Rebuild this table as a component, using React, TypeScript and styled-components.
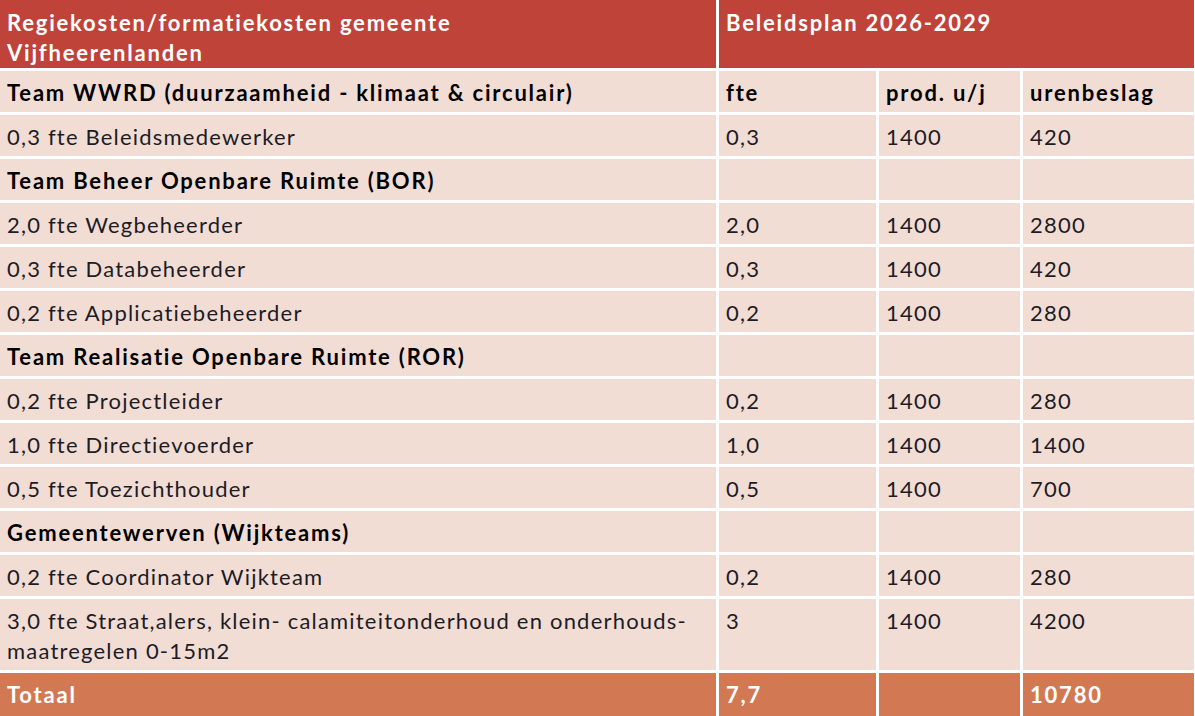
import styled, { createGlobalStyle } from "styled-components";

const GlobalStyle = createGlobalStyle`
	html, body {
		margin: 0;
		padding: 0;
		background: #ffffff;
	}
	body {
		width: 1195px;
		height: 716px;
		overflow: hidden;
		font-family: Lato, "Open Sans", sans-serif;
	}
`;

type Variant = "head" | "body" | "total";

const colors: Record<Variant, string> = {
	head: "#c0433a",
	body: "#f2ddd5",
	total: "#d27953",
};

const paddings: Record<Variant, string> = {
	head: "8px",
	body: "7px",
	total: "7px",
};

const Table = styled.div`
	display: grid;
	grid-template-columns: 716px 157px 141px 171px;
	grid-template-rows: 68px repeat(12, 41px) 71px 46px;
	gap: 3px;
	width: 1195px;
	padding-right: 1px;
	box-sizing: border-box;
	background: #ffffff;
`;

const Cell = styled.div<{ $variant: Variant; $bold?: boolean; $span?: number }>`
	grid-column: span ${(p) => p.$span ?? 1};
	background: ${(p) => colors[p.$variant]};
	color: ${(p) => (p.$variant === "body" ? (p.$bold ? "#000000" : "#1c1c26") : "#ffffff")};
	font-weight: ${(p) => (p.$bold || p.$variant !== "body" ? 700 : 400)};
	letter-spacing: ${(p) => (p.$bold || p.$variant !== "body" ? "1.8px" : "1.2px")};
	font-size: 22px;
	line-height: 30px;
	padding: ${(p) => paddings[p.$variant]} 7px 0 7px;
	box-sizing: border-box;
	white-space: pre-line;
	overflow: hidden;
`;

type Row = {
	label: string;
	fte?: string;
	prod?: string;
	uren?: string;
	group?: boolean;
};

const rows: Row[] = [
	{ label: "Team WWRD (duurzaamheid - klimaat & circulair)", fte: "fte", prod: "prod. u/j", uren: "urenbeslag", group: true },
	{ label: "0,3 fte Beleidsmedewerker", fte: "0,3", prod: "1400", uren: "420" },
	{ label: "Team Beheer Openbare Ruimte (BOR)", group: true },
	{ label: "2,0 fte Wegbeheerder", fte: "2,0", prod: "1400", uren: "2800" },
	{ label: "0,3 fte Databeheerder", fte: "0,3", prod: "1400", uren: "420" },
	{ label: "0,2 fte Applicatiebeheerder", fte: "0,2", prod: "1400", uren: "280" },
	{ label: "Team Realisatie Openbare Ruimte (ROR)", group: true },
	{ label: "0,2 fte Projectleider", fte: "0,2", prod: "1400", uren: "280" },
	{ label: "1,0 fte Directievoerder", fte: "1,0", prod: "1400", uren: "1400" },
	{ label: "0,5 fte Toezichthouder", fte: "0,5", prod: "1400", uren: "700" },
	{ label: "Gemeentewerven (Wijkteams)", group: true },
	{ label: "0,2 fte Coordinator Wijkteam", fte: "0,2", prod: "1400", uren: "280" },
	{
		label: "3,0 fte Straat,alers, klein- calamiteitonderhoud en onderhouds-\nmaatregelen 0-15m2",
		fte: "3",
		prod: "1400",
		uren: "4200",
	},
];

function App() {
	return (
		<>
			<GlobalStyle />
			<Table>
				<Cell $variant="head">{"Regiekosten/formatiekosten gemeente\nVijfheerenlanden"}</Cell>
				<Cell $variant="head" $span={3}>
					Beleidsplan 2026-2029
				</Cell>
				{rows.map((r) =>
					[r.label, r.fte, r.prod, r.uren].map((text, i) => (
						<Cell key={r.label + i} $variant="body" $bold={r.group}>
							{text}
						</Cell>
					))
				)}
				<Cell $variant="total">Totaal</Cell>
				<Cell $variant="total">7,7</Cell>
				<Cell $variant="total" />
				<Cell $variant="total">10780</Cell>
			</Table>
		</>
	);
}

export default App;
